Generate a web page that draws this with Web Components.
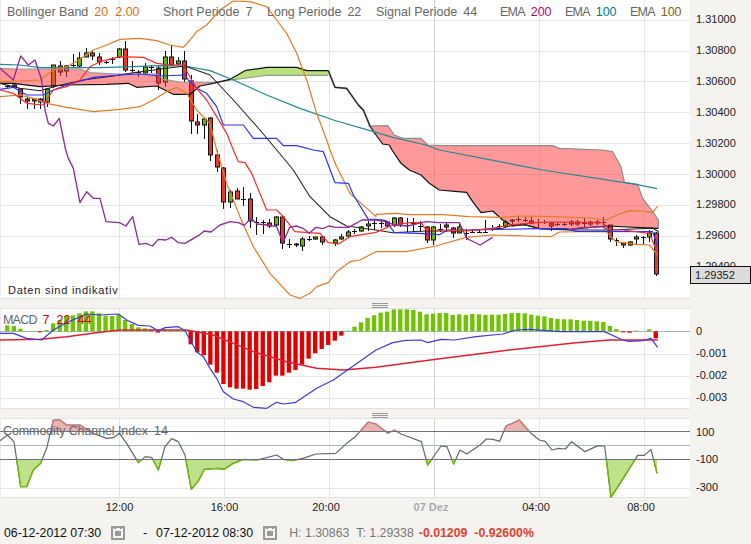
<!DOCTYPE html>
<html lang="de">
<head>
<meta charset="utf-8">
<title>Chart</title>
<style>
  html, body { margin: 0; padding: 0; background: #f4f3ef; }
  body { font-family: "Liberation Sans", Arial, sans-serif; }
</style>
</head>
<body>
<chart-app></chart-app>

<script>
// all chart coordinates are written at 3x the screen pixel, svg viewBox scales them back
const shift = (pts, dx = 0, dy = 0) => {
  const out = [];
  for (let i = 0; i < pts.length; i += 2) out.push(pts[i] + dx, pts[i + 1] + dy);
  return out;
};
const toStr = (pts) => {
  let s = "";
  for (let i = 0; i < pts.length; i += 2) s += pts[i] + "," + pts[i + 1] + " ";
  return s;
};
const line = (pts, color, w = 3.6) =>
  `<polyline points="${toStr(pts)}" fill="none" stroke="${color}" stroke-width="${w}" stroke-linejoin="round"/>`;
const barX = (i) => 7.3 + 6.55 * i;

const VGRID = [119, 224, 329, 434, 539, 644];
function grid(hs, top, bottom, hcolor = "#e6e6e6") {
  let s = "";
  for (const y of hs) s += `<rect x="0" y="${y * 3}" width="2070" height="3" fill="${hcolor}"/>`;
  for (const x of VGRID) {
    const c = x === 434 ? "#d3d4d8" : "#e6e6e6";
    s += `<rect x="${x * 3}" y="${top * 3}" width="3" height="${(bottom - top) * 3}" fill="${c}"/>`;
  }
  return s;
}

// hi, top, bottom, lo, colour (r, g, or d for a doji dash)
const CANDLES = [
  [85,86,86,88,"d"],[84,85,87,88,"r"],[89,89,97,104,"r"],[97,99,101,109,"r"],[98,99,101,109,"r"],
  [98,99,102,109,"r"],[88,89,102,107,"g"],[65,65,86,88,"o"],[61,66,72,76,"r"],[65,66,71,77,"r"],
  [54,65,65,67,"d"],[52,58,66,68,"g"],[48,53,57,57,"g"],[51,53,56,60,"r"],[53,57,62,65,"r"],
  [61,62,62,64,"d"],[57,59,59,64,"d"],[48,49,57,58,"g"],[41,49,70,72,"r"],[61,70,70,73,"d"],
  [70,72,72,77,"d"],[63,67,73,74,"g"],[65,67,67,73,"d"],[66,68,83,90,"r"],[51,57,82,87,"g"],
  [45,57,65,66,"r"],[57,61,64,65,"g"],[51,61,79,82,"r"],[75,81,121,134,"r"],[114,122,125,134,"r"],
  [118,119,125,139,"g"],[117,118,155,161,"r"],[150,155,167,172,"r"],[167,168,202,209,"r"],[190,192,202,208,"g"],
  [188,191,199,199,"r"],[187,199,199,206,"d"],[193,199,221,228,"r"],[217,222,222,235,"d"],[220,222,222,234,"d"],
  [219,223,226,228,"r"],[216,217,225,226,"g"],[216,217,243,249,"r"],[239,244,244,248,"d"],[243,244,245,247,"r"],
  [237,239,246,251,"g"],[236,239,239,241,"d"],[237,237,239,240,"g"],[236,237,242,245,"r"],null,
  [239,240,243,246,"g"],[234,237,239,240,"g"],[230,232,236,237,"g"],[229,231,231,234,"d"],[226,227,231,232,"g"],
  [221,224,226,231,"g"],[220,223,223,230,"d"],[219,223,223,228,"d"],[221,222,226,228,"r"],[217,218,225,227,"g"],
  [217,218,224,227,"r"],[218,225,225,232,"d"],[218,223,223,232,"d"],[221,226,226,232,"d"],[226,227,240,243,"r"],
  [226,227,240,245,"g"],[224,229,229,232,"d"],[222,225,227,232,"r"],[227,228,233,238,"r"],[223,227,233,233,"g"],
  [229,233,233,240,"d"],[229,232,232,233,"d"],[229,232,232,233,"d"],[220,232,232,232,"d"],[225,228,228,231,"d"],
  [224,226,226,228,"d"],[220,222,226,227,"g"],[219,220,221,226,"r"],[216,219,219,222,"d"],[217,220,220,222,"d"],
  [217,221,223,224,"r"],[219,222,222,228,"d"],[220,222,222,224,"d"],[222,223,226,231,"r"],[222,224,224,226,"d"],
  [222,224,224,226,"d"],[220,222,224,226,"r"],[220,222,224,226,"r"],[218,223,223,228,"d"],[221,222,224,226,"r"],
  [220,222,223,225,"r"],[217,222,222,225,"d"],[225,225,239,242,"r"],[238,240,240,246,"d"],[242,243,245,248,"r"],
  [241,242,245,246,"o"],[235,237,239,245,"g"],[236,237,237,244,"d"],[230,233,237,242,"g"],[232,233,274,276,"r"]
];
const FILL = { r: "#e8382e", g: "#6fb400", o: "#b08412" };

function candles() {
  let s = "";
  CANDLES.forEach((c, i) => {
    if (!c) return;
    const x = Math.round(barX(i)) * 3 + 1.5;
    s += `<rect x="${x - 1.5}" y="${c[0] * 3}" width="3" height="${(c[3] - c[0]) * 3}" fill="#111"/>`;
    if (c[4] === "d") s += `<rect x="${x - 7.5}" y="${c[1] * 3}" width="15" height="3" fill="#111"/>`;
    else s += `<rect x="${x - 6}" y="${c[1] * 3}" width="12" height="${(c[2] - c[1]) * 3}" fill="${FILL[c[4]]}" stroke="#111" stroke-width="3"/>`;
  });
  return s;
}

const UPPER = [0,245,60,243,120,240,160,210,200,200,240,178,280,150,320,135,360,118,420,115,470,122,510,135,550,142,570,120,590,95,620,75,660,30,700,3,750,5,800,20,830,60,860,100,890,160,920,240,950,340,980,420,990,450,1010,500,1050,580,1128,650]
  .concat(shift([0,193,60,190,100,194,200,194,280,200,380,202,430,198,530,200,640,204,690,210,730,192,760,182,800,183,830,188,845,168], 1128, 450));
const LOWER = [0,290,60,285,100,295,140,310,200,322,280,335,360,328,420,320,460,300,500,275,530,262,560,280,590,330,630,370,650,450]
  .concat(shift([680,100,720,200,760,290,810,370,870,435,900,445,930,430,950,410,985,398,1010,365,1050,335,1080,330,1128,305], 0, 450))
  .concat(shift([90,305,180,288,270,262,350,255,450,258,525,260,550,246,690,244,720,275,780,283,820,285,845,315], 1128, 450));
const RED = [0,270,40,280,80,310,130,315,160,270,200,260,240,240,270,200,300,185,360,170,430,172,470,190,510,195,550,195,575,240,590,265,620,300,650,350,680,400,700,450]
  .concat(shift([715,35,735,38,755,70,800,180,830,180,850,200,885,245,960,250,985,278,1015,282,1050,260,1128,247], 0, 450))
  .concat(shift([50,225,100,218,135,218,150,240,280,242,350,235,400,225,480,218,530,216,680,218,700,240,740,240,820,250,845,310], 1128, 450));
const BLUE = [0,268,40,262,80,285,130,285,160,270,200,255,280,232,360,225,420,222,480,228,555,225,565,240,590,265,620,280,650,320,670,375,730,375,760,415,830,415,850,437,890,437,940,450]
  .concat(shift([970,5,1005,98,1045,100,1060,135,1105,208,1128,208], 0, 450))
  .concat(shift([30,212,55,248,130,250,190,254,215,240,280,240,490,236,570,236,600,244,830,245,845,290], 1128, 450));
const BLACK = [0,250,60,265,120,272,170,258,250,240,340,228,400,218,500,205,555,198,630,225,700,300,780,390,830,450]
  .concat(shift([880,60,930,140,990,200,1040,228,1128,240], 0, 450))
  .concat(shift([50,248,150,243,250,243,380,235,400,228,450,225,490,236,580,240,700,240,830,235,848,245], 1128, 450));
const PURPLE = [0,205,40,240,62,168,85,195,105,180,125,240,135,330,145,370,160,378,178,355,197,450]
  .concat(shift([205,25,220,55,240,158,260,125,280,145,300,145,318,215,358,218,378,228,398,200,417,283,437,280,457,288,475,268,497,270,515,262,535,278,555,280,595,257,613,243,633,246,660,225,690,215,715,218,733,226,752,205,772,222,800,225,830,230,849,278,869,232,889,228,909,235,928,250,948,232,968,236,987,228,1007,232,1046,232,1086,210,1128,210], 0, 450))
  .concat(shift([30,215,55,225,95,228,150,215,190,218,250,218,272,265,312,285,350,262], 1128, 450));
const PURPLE2 = shift([580,240,610,234,680,230,695,240], 1128, 450);
const TEAL = [0,193,60,195,120,203,200,203,300,203,400,200,480,197,555,198,630,212,700,240,800,285,900,325,1000,360,1128,397]
  .concat(shift([50,412,150,435], 1128, 0))
  .concat(shift([190,0,500,60,780,103,843,116], 1128, 450));

const CLOUD1_TOP = [0,205,50,207,120,207,240,207,270,218,350,222,470,222,490,238,540,246,640,247];
const CLOUD1_BOT = [0,250,40,250,120,260,200,255,320,253,385,250,410,262,470,258,520,283,570,283,600,258,640,250];
const CLOUD2_TOP = [640,250,690,238,735,212,800,202,890,202,920,212,985,212];
const CLOUD2_BOT = [640,247,800,226,985,226];
const DROP = [985,212,1005,262,1040,265,1075,315,1090,330,1110,378,1128,405];
const CLOUD3_TOP = [1105,378,1163,377,1183,405,1208,415,1263,415,1283,435,1333,437,1658,437,1678,445,1808,450,1838,455,1863,500,1873,547,1913,553,1928,595,1958,635,1975,660,1975,685];
const CLOUD3_BOT = [1128,405,1148,432,1168,435,1176,450,1203,490,1228,510,1263,525,1288,550,1318,570,1373,575,1400,577,1418,605,1443,638,1478,633,1508,660,1538,678,1568,672,1618,686,1708,688,1818,678,1975,685];
const revPts = (pts) => {
  const out = [];
  for (let i = pts.length - 2; i >= 0; i -= 2) out.push(pts[i], pts[i + 1]);
  return out;
};

class PricePlot extends HTMLElement {
  constructor() {
    super();
    this.attachShadow({ mode: "open" });
  }
  connectedCallback() {
    const cloudFill = "rgba(255,50,50,.5)";
    this.shadowRoot.innerHTML = `
    <style>
      :host { display: block; position: relative; width: 690px; height: 299px; background: #fff; }
      svg { display: block; }
      .note {
        position: absolute; left: 2px; bottom: 1px; padding: 1px 0 2px 6px; background: #fff;
        font: 11px "Liberation Sans", Arial, sans-serif; letter-spacing: .75px; color: #222;
      }
      .legend { position: absolute; left: 7px; top: 3px; display: flex; }
    </style>
    <svg width="690" height="299" viewBox="0 0 2070 897">
      ${grid([20, 51, 81, 112, 143, 174, 205, 236, 267], 0, 298)}
      <rect x="0" y="894" width="2070" height="3" fill="#e2e2e0"/>
      <rect x="0" y="0" width="3" height="897" fill="#ececec"/>
      ${candles()}
      <polygon points="${toStr(CLOUD1_TOP.concat(revPts(CLOUD1_BOT)))}" fill="${cloudFill}"/>
      <polygon points="${toStr(CLOUD3_TOP.concat(revPts(CLOUD3_BOT)))}" fill="${cloudFill}"/>
      <polygon points="${toStr(CLOUD2_TOP.concat(revPts(CLOUD2_BOT)))}" fill="#b9e27e"/>
      ${line(CLOUD1_TOP, "#999")}
      ${line(CLOUD2_BOT, "#999")}
      ${line(CLOUD3_TOP, "#8c8c8c")}
      ${line(DROP, "#aaa", 6)}
      ${line(CLOUD1_BOT, "#111")}
      ${line(CLOUD2_TOP, "#111")}
      ${line(DROP, "#222")}
      ${line(CLOUD3_BOT, "#111")}
      ${line(TEAL, "#1e8a98")}
      ${line(UPPER, "#e27c24")}
      ${line(LOWER, "#e27c24")}
      ${line(BLACK, "#222", 3.2)}
      ${line(BLUE, "#2a32ff")}
      ${line(RED, "#ff2a2a")}
      ${line(PURPLE, "#8e2c98", 4)}
      ${line(PURPLE2, "#8e2c98", 4)}
    </svg>
    <div class="legend"><slot></slot></div>
    <div class="note">Daten sind indikativ</div>`;
  }
}

// value column is a plain grid, one row per gridline
class ValueAxis extends HTMLElement {
  constructor() {
    super();
    this.attachShadow({ mode: "open" });
  }
  connectedCallback() {
    const labels = this.getAttribute("labels").split(" ");
    const row = this.getAttribute("row");
    const top = this.getAttribute("top");
    const h = this.getAttribute("h");
    this.shadowRoot.innerHTML = `
    <style>
      :host {
        display: grid; grid-auto-rows: ${row}px; align-items: center; align-content: start;
        box-sizing: border-box; width: 61px; height: ${h}px; padding: ${top}px 0 0 6px; position: relative;
        font: 11px "Liberation Sans", Arial, sans-serif; color: #222;
      }
    </style>
    ${labels.map((l) => `<div>${l}</div>`).join("")}
    <slot></slot>`;
  }
}

class PriceTag extends HTMLElement {
  constructor() {
    super();
    this.attachShadow({ mode: "open" });
  }
  connectedCallback() {
    this.shadowRoot.innerHTML = `
    <style>
      :host {
        position: absolute; left: 0; right: 0; top: 266px; height: 18px; box-sizing: border-box;
        display: flex; align-items: center; padding-left: 4px;
        background: #dcdcdc; border: 1px solid #111; font-size: 11px; color: #222;
      }
    </style>
    <slot></slot>`;
  }
}

class IndLabel extends HTMLElement {
  constructor() {
    super();
    this.attachShadow({ mode: "open" });
  }
  connectedCallback() {
    const vals = (this.getAttribute("values") || "").split(" ");
    const color = this.getAttribute("color") || "#666";
    this.shadowRoot.innerHTML = `
    <style>
      :host {
        display: block; white-space: nowrap; color: #666;
        font: 12.5px/15px "Liberation Sans", Arial, sans-serif; flex: 0 0 auto;
      }
      span { color: ${color}; margin-left: 6px; letter-spacing: 0; }
      span + span { margin-left: 7px; }
    </style>
    <slot></slot>${vals.map((v) => `<span>${v}</span>`).join("")}`;
  }
}

// bar top per candle, in zoom-sized coordinates; above 94 is red
const MACD = [76,78,86,93,93,97,90,70,60,48,46,40,34,34,40,47,48,45,60,72,82,85,88,98,88,90,90,92,133,157,166,194,218,252,262,266,266,269,267,258,247,227,227,218,210,194,176,160,147,135,122,107,92,80,67,54,46,
  38,35,28,28,28,30,35,43,41,39,39,45,43,45,42,43,45,44,44,42,39,39,40,44,47,49,54,57,58,58,60,62,63,64,66,78,87,97,98,92,94,88,115];
const MACD_BLUE = [0,100,40,100,80,115,125,120,160,90,200,68,260,42,300,45,355,42,380,60,415,76,450,78,475,92,495,83,535,80,555,92,590,155,610,170,630,205,650,235,670,275,700,297,730,305,760,322,800,325,830,307,850,312,885,308,950,265,1000,240,1050,205,1128,150]
  .concat(shift([50,128,90,121,135,120,155,128,195,118,235,120,300,110,380,102,420,90,460,88,550,95,685,95,740,120,760,124,800,122,825,115,845,142], 1128, 0));
const MACD_RED = [0,120,120,118,200,110,300,97,360,90,560,90,640,105,760,155,860,185,950,205,1030,210,1128,202]
  .concat(shift([180,178,400,150,600,128,700,120,845,120], 1128, 0));

class MacdPlot extends HTMLElement {
  constructor() {
    super();
    this.attachShadow({ mode: "open" });
  }
  connectedCallback() {
    let bars = "";
    MACD.forEach((v, i) => {
      const x = barX(i) * 3;
      const y = v + 900;
      if (v <= 94) bars += `<rect x="${x - 6.5}" y="${y}" width="13" height="${994 - y}" fill="#6fc400"/>`;
      else bars += `<rect x="${x - 6.5}" y="994" width="13" height="${y - 994}" fill="#e00000"/>`;
    });
    this.shadowRoot.innerHTML = `
    <style>
      :host { display: block; position: relative; width: 690px; height: 101px; background: #fff; }
      svg { display: block; }
      .legend { position: absolute; left: 3px; top: 4px; display: flex; }
    </style>
    <svg width="690" height="101" viewBox="0 924 2070 303">
      ${grid([354, 376, 398], 308, 409)}
      <rect x="0" y="924" width="2070" height="3" fill="#e2e2e0"/>
      <rect x="0" y="1224" width="2070" height="3" fill="#e2e2e0"/>
      <rect x="0" y="924" width="3" height="303" fill="#ececec"/>
      <rect x="0" y="993" width="2070" height="3" fill="#a9b6c2"/>
      ${bars}
      ${line(shift(MACD_RED, 0, 900), "#e02030", 4.5)}
      ${line(shift(MACD_BLUE, 0, 900), "#3a3ae0")}
    </svg>
    <div class="legend"><slot></slot></div>`;
  }
}

const CCI = [0,92,22,75,42,95,62,230,80,230,100,180,122,160,140,115,160,30,180,30,200,45,240,45,280,70,320,85,340,83,358,70,380,100,415,158,436,140,456,143,475,180,495,110,515,86,535,95,555,135,574,238,594,215,613,178,653,175,672,178,700,160,730,148,770,150,800,143,830,135,850,148,875,152,909,145,948,132,1007,130,1046,95,1066,80,1105,36,1128,42]
  .concat(shift([36,70,55,60,75,72,136,95,155,165,195,108,213,110,233,162,252,120,272,132,312,105,331,87,351,88,371,94,390,48,430,30,465,70,490,90,508,94,528,120,548,115,568,117,587,95,627,125,666,107,686,108,705,262,745,200,785,136,805,136,825,118,843,190], 1128, 0));

class CciPlot extends HTMLElement {
  constructor() {
    super();
    this.attachShadow({ mode: "open" });
  }
  connectedCallback() {
    const pts = shift(CCI, 0, 1230);
    const endX = pts[pts.length - 2];
    this.shadowRoot.innerHTML = `
    <style>
      :host { display: block; position: relative; width: 690px; height: 80px; background: #fff; }
      svg { display: block; }
      .legend { position: absolute; left: 3px; top: 4px; display: flex; }
    </style>
    <svg width="690" height="80" viewBox="0 1254 2070 240">
      <defs>
        <clipPath id="over"><rect x="0" y="1254" width="2070" height="41"/></clipPath>
        <clipPath id="under"><rect x="0" y="1379" width="2070" height="115"/></clipPath>
      </defs>
      ${grid([488], 418, 498)}
      <rect x="0" y="1254" width="2070" height="3" fill="#e2e2e0"/>
      <rect x="0" y="1491" width="2070" height="3" fill="#e2e2e0"/>
      <rect x="0" y="1254" width="3" height="240" fill="#ececec"/>
      <rect x="0" y="1335" width="2070" height="3" fill="#a9b6c2"/>
      <polygon clip-path="url(#over)" points="${toStr(pts)} ${endX},1494 0,1494" fill="#e8b4b0"/>
      <polygon clip-path="url(#under)" points="${toStr(pts)} ${endX},1254 0,1254" fill="#bde28a"/>
      ${line(pts, "#666")}
      <g clip-path="url(#over)">${line(pts, "#d87c78")}</g>
      <g clip-path="url(#under)">${line(pts, "#70bc00", 4)}</g>
      <rect x="0" y="1293" width="2070" height="3" fill="#6f6f82"/>
      <rect x="0" y="1377" width="2070" height="3" fill="#6f6f82"/>
    </svg>
    <div class="legend"><slot></slot></div>`;
  }
}

class PaneGrip extends HTMLElement {
  constructor() {
    super();
    this.attachShadow({ mode: "open" });
  }
  connectedCallback() {
    this.shadowRoot.innerHTML = `
    <style>
      :host { display: flex; justify-content: center; align-items: flex-end; width: 690px; height: 9px; padding-left: 70px; box-sizing: border-box; }
      i { display: block; width: 16px; height: 5px; border-top: 1px solid #999; border-bottom: 1px solid #999; position: relative; box-sizing: border-box; }
      i::after { content: ""; position: absolute; left: 0; right: 0; top: 1px; height: 1px; background: #999; }
    </style>
    <i></i>`;
  }
}

class TimeAxis extends HTMLElement {
  constructor() {
    super();
    this.attachShadow({ mode: "open" });
  }
  connectedCallback() {
    const ticks = ["12:00", "16:00", "20:00", "07 Dez", "04:00", "08:00"];
    this.shadowRoot.innerHTML = `
    <style>
      :host {
        display: grid; grid-template-columns: 105px 105px 98px 112px 98px 112px; align-items: center;
        height: 17px; box-sizing: border-box; padding-left: 67px;
        font: 11px "Liberation Sans", Arial, sans-serif; color: #222; text-align: center;
      }
      .day { color: #aaa; font-weight: bold; }
    </style>
    ${ticks.map((t) => `<div class="${t.includes("Dez") ? "day" : ""}">${t}</div>`).join("")}`;
  }
}

class CalIcon extends HTMLElement {
  constructor() {
    super();
    this.attachShadow({ mode: "open" });
  }
  connectedCallback() {
    this.shadowRoot.innerHTML = `
    <style>:host { display: inline-block; width: 14px; height: 14px; } svg { display: block; }</style>
    <svg width="14" height="14" viewBox="0 0 14 14">
      <rect width="14" height="14" fill="#999"/>
      <rect x="2" y="2" width="10" height="10" fill="#f4f3ef"/>
      <rect x="3" y="2" width="2" height="1" fill="#999"/>
      <rect x="9" y="2" width="2" height="1" fill="#999"/>
      <rect x="4" y="5" width="6" height="5" fill="#999"/>
    </svg>`;
  }
}

class RangeBar extends HTMLElement {
  constructor() {
    super();
    this.attachShadow({ mode: "open" });
  }
  connectedCallback() {
    this.shadowRoot.innerHTML = `
    <style>
      :host {
        display: flex; align-items: center; height: 29px; box-sizing: border-box; padding: 7px 0 0 4px;
        font: 12.3px "Liberation Sans", Arial, sans-serif; color: #111; white-space: nowrap;
      }
      .ic { margin-left: 10px; }
      .dash { margin-left: 18px; width: 13px; }
      .g { color: #777; }
      .h { margin-left: 12px; }
      .t { margin-left: 7px; }
      .r { color: #e0402e; font-weight: bold; }
      .d1 { margin-left: 5px; }
      .d2 { margin-left: 7px; }
    </style>
    <span>06-12-2012 07:30</span><cal-icon class="ic"></cal-icon>
    <span class="dash">-</span><span>07-12-2012 08:30</span><cal-icon class="ic"></cal-icon>
    <span class="g h">H: 1.30863</span><span class="g t">T: 1.29338</span>
    <span class="r d1">-0.01209</span><span class="r d2">-0.92600%</span>`;
  }
}

class ChartPane extends HTMLElement {
  constructor() {
    super();
    this.attachShadow({ mode: "open" });
  }
  connectedCallback() {
    this.shadowRoot.innerHTML = `
    <style>:host { display: flex; width: 751px; }</style>
    <slot></slot>`;
  }
}

class ChartApp extends HTMLElement {
  constructor() {
    super();
    this.attachShadow({ mode: "open" });
  }
  connectedCallback() {
    this.shadowRoot.innerHTML = `
    <style>
      :host { display: block; width: 751px; height: 544px; overflow: hidden; background: #f4f3ef; }
    </style>
    <chart-pane>
      <price-plot>
        <ind-label style="width:156px;margin-top:2px" values="20 2.00" color="#dc6e14">Bollinger Band</ind-label>
        <ind-label style="width:104px;margin-top:2px" values="7">Short Periode</ind-label>
        <ind-label style="width:109px;margin-top:2px" values="22">Long Periode</ind-label>
        <ind-label style="width:124px;margin-top:2px" values="44">Signal Periode</ind-label>
        <ind-label style="width:65px;margin-top:2px;letter-spacing:-.8px" values="200" color="#b8006e">EMA</ind-label>
        <ind-label style="width:65px;margin-top:2px;letter-spacing:-.8px" values="100" color="#00788c">EMA</ind-label>
        <ind-label style="margin-top:2px;letter-spacing:-.8px" values="100" color="#8c5c14">EMA</ind-label>
      </price-plot>
      <value-axis h="299" row="30.85" top="4" labels="1.31000 1.30800 1.30600 1.30400 1.30200 1.30000 1.29800 1.29600 1.29400">
        <price-tag>1.29352</price-tag>
      </value-axis>
    </chart-pane>
    <pane-grip></pane-grip>
    <chart-pane>
      <macd-plot><ind-label style="margin-top:1px;letter-spacing:-.8px" values="7 22 44" color="#d00000">MACD</ind-label></macd-plot>
      <value-axis h="101" row="22" top="12" labels="0 -0.001 -0.002 -0.003"></value-axis>
    </chart-pane>
    <pane-grip></pane-grip>
    <chart-pane>
      <cci-plot><ind-label style="margin-top:2px;letter-spacing:-.1px" values="14">Commodity Channel Index</ind-label></cci-plot>
      <value-axis h="80" row="27.5" top="0" labels="100 -100 -300"></value-axis>
    </chart-pane>
    <time-axis></time-axis>
    <range-bar></range-bar>`;
  }
}

customElements.define("cal-icon", CalIcon);
customElements.define("ind-label", IndLabel);
customElements.define("price-tag", PriceTag);
customElements.define("value-axis", ValueAxis);
customElements.define("price-plot", PricePlot);
customElements.define("macd-plot", MacdPlot);
customElements.define("cci-plot", CciPlot);
customElements.define("pane-grip", PaneGrip);
customElements.define("time-axis", TimeAxis);
customElements.define("range-bar", RangeBar);
customElements.define("chart-pane", ChartPane);
customElements.define("chart-app", ChartApp);
</script>
</body>
</html>
